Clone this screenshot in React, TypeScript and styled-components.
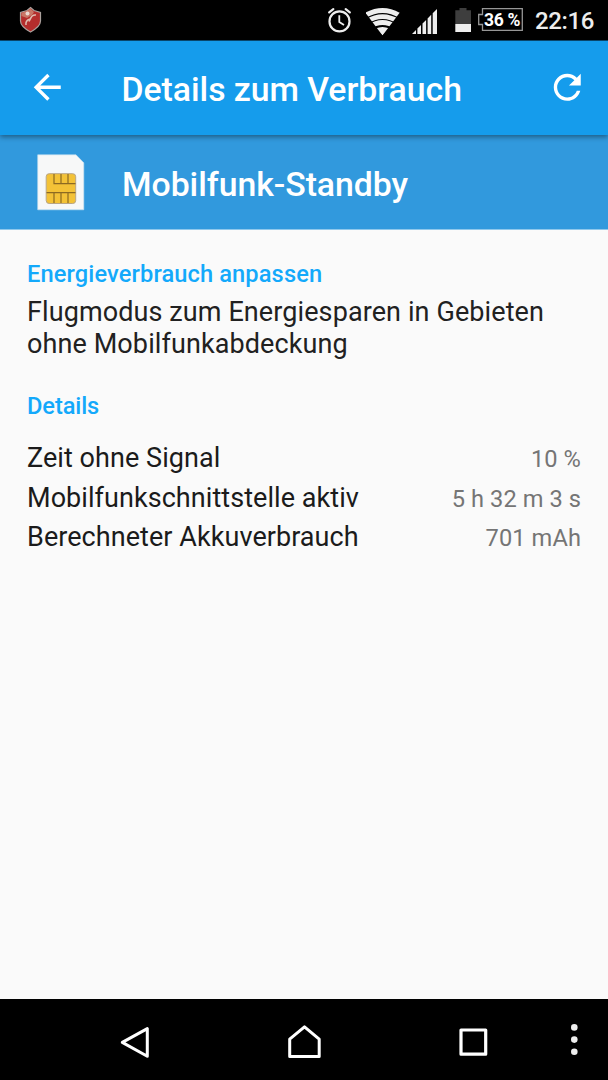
import React from "react";
import styled, { createGlobalStyle } from "styled-components";

const GlobalStyle = createGlobalStyle`
  * { box-sizing: border-box; }
  body { margin: 0; background: #fafafa; font-family: Roboto, "Liberation Sans", sans-serif; }
  svg { display: block; flex: none; }
`;

const Screen = styled.div`
  width: 608px;
  height: 1080px;
  display: flex;
  flex-direction: column;
  background: #fafafa;
  overflow: hidden;
`;

const StatusBar = styled.header`
  height: 41px;
  flex: none;
  display: flex;
  align-items: flex-start;
  padding: 6px 12px 0 19px;
  background: #000;
  border-bottom: 1px solid #0a4a72;
`;

const StatusIcons = styled.div`
  display: flex;
  margin-left: auto;
`;

const BatteryPercent = styled.div`
  width: 46px;
  height: 28px;
  margin-left: 6px;
  display: grid;
  > * { grid-area: 1 / 1; }
`;

const PercentText = styled.span`
  padding-left: 6px;
  font-size: 17.5px;
  font-weight: 700;
  line-height: 28px;
  letter-spacing: -0.35px;
  white-space: nowrap;
  color: #fff;
`;

const Clock = styled.time`
  width: 61px;
  margin-left: 11px;
  font-size: 24px;
  font-weight: 500;
  line-height: 31px;
  letter-spacing: -0.35px;
  color: #ededed;
`;

const AppBar = styled.div`
  height: 94px;
  flex: none;
  display: flex;
  align-items: center;
  padding: 0 21px 1px 27px;
  background: #159cec;
  box-shadow: 0 2px 5px rgba(0, 0, 0, 0.4);
  z-index: 1;
`;

const Heading = styled.h1`
  margin: 4px auto 0 54px;
  font-size: 33.8px;
  font-weight: 500;
  line-height: 40px;
  letter-spacing: -0.04px;
  color: #fff;
  white-space: nowrap;
`;

const AppEntry = styled.div`
  height: 95px;
  flex: none;
  display: flex;
  align-items: center;
  padding-left: 36px;
  background: #3199dd;
  border-bottom: 1px solid #8fc8ec;
`;

const EntryName = styled.h2`
  margin: 5px 0 0 36px;
  font-size: 33.8px;
  font-weight: 500;
  line-height: 40px;
  letter-spacing: -0.04px;
  color: #fff;
`;

const Content = styled.main`
  flex: 1;
  padding: 30px 27px 0;
`;

const SectionTitle = styled.h3<{ $spacing?: number }>`
  margin: 0;
  font-size: 23.64px;
  font-weight: 500;
  line-height: 28px;
  letter-spacing: ${({ $spacing = 0 }) => $spacing}px;
  color: #13a9fb;
`;

const Advice = styled.p`
  margin: 8px 0 32px;
  font-size: 27px;
  line-height: 32px;
  letter-spacing: 0.1px;
  color: #212121;
`;

const Rows = styled.dl`
  margin: 19px 0 0;
`;

const Row = styled.div`
  height: 39.6px;
  display: flex;
  justify-content: space-between;
  align-items: baseline;
`;

const Label = styled.dt`
  font-size: 27px;
  line-height: 39px;
  letter-spacing: 0.06px;
  color: #1b1b1b;
`;

const Value = styled.dd`
  margin: 0;
  font-size: 23.64px;
  line-height: 39px;
  letter-spacing: 0.08px;
  color: #757575;
`;

const NavBar = styled.nav`
  height: 81px;
  flex: none;
  display: flex;
  align-items: center;
  padding: 5px 24px 0 118px;
  background: #000;
`;

const NavSlot = styled.span<{ $before?: number }>`
  display: block;
  margin-left: ${({ $before = 0 }) => $before}px;
`;

const WifiIcon = styled.svg`
  margin-left: 13px;
`;

const SignalIcon = styled.svg`
  margin-left: 12px;
`;

const BatteryIcon = styled.svg`
  margin-left: 17px;
`;

const Shield = () => (
  <svg width="24" height="28" viewBox="19 6 24 28">
    <path d="M30.5 7.5 34 10.5 40.5 12.5V21C40.5 26 35 29.5 30.5 32 26 29.5 20.5 26 20.5 21V12.5L27 10.5Z" fill="#b42d2c" stroke="#aaa19d" strokeWidth="1.2" />
    <path d="M21.5 13 28 10.5 30.5 8.5 34 12 32 15 27 18 21.5 16Z" fill="#c87565" />
    <circle cx="27.5" cy="13.5" r="2" fill="#ead8d0" />
    <path d="M36 15C31.5 14.5 31 18 29 21.5M30 19C26.5 20 25.5 22 26 25" fill="none" stroke="#dfbcb0" strokeWidth="1.5" />
  </svg>
);

const Alarm = () => (
  <svg width="26" height="28" viewBox="327 6 26 28" fill="none" stroke="#eee" strokeLinecap="round">
    <circle cx="339.5" cy="21.4" r="10" strokeWidth="2.2" />
    <path d="M339.3 15.2V22L344 25" strokeWidth="1.8" strokeLinecap="butt" />
    <path d="M329.2 12.3 333.3 9.2M345.7 9.2 349.8 12.3" strokeWidth="2.3" />
  </svg>
);

const Wifi = () => (
  <WifiIcon width="34" height="30" viewBox="366 6 34 30">
    <defs>
      <clipPath id="wifi-fan"><path d="M382.5 35.5 364.4 11.5V6H400.6V11.5Z" /></clipPath>
    </defs>
    <g clipPath="url(#wifi-fan)" fill="none" stroke="#eee" strokeWidth="4.7">
      <path d="M364 16.2Q382.5 4.8 401 16.2" />
      <path d="M366 21.9Q382.5 11.3 399 21.9" />
      <path d="M369 27Q382.5 18 396 27" />
      <path d="M382.5 35.5 375.5 28.6Q382.5 25.2 389.5 28.6Z" fill="#eee" stroke="none" />
    </g>
  </WifiIcon>
);

const Signal = () => (
  <SignalIcon width="26" height="28" viewBox="412 6 26 28" fill="#eee">
    <path d="M412 34 416 30V34ZM417.4 28.6 421 25V34H417.4ZM422.5 23.5 426.1 19.9V34H422.5ZM427.6 18.4 431.2 14.8V34H427.6ZM432.7 13.3 437 9V34H432.7Z" />
  </SignalIcon>
);

const Battery = () => (
  <BatteryIcon width="17" height="28" viewBox="455 6 17 28">
    <path d="M455.3 10.3H459.5V8H466.5V10.3H471V24H455.3Z" fill="#3e3e3e" />
    <path d="M455.3 24H471V32H455.3Z" fill="#eee" />
  </BatteryIcon>
);

const BatteryFrame = () => (
  <svg width="46" height="28" viewBox="478 6 46 28">
    <path d="M482.5 8.7H522.3V30.4H482.5V24.5H478.7V14.5H482.5Z" fill="none" stroke="#969696" strokeWidth="1.3" />
  </svg>
);

const BackArrow = () => (
  <svg width="40.5" height="40.5" viewBox="0 0 24 24" fill="#fff">
    <path d="M20 11H7.83l5.59-5.59L12 4l-8 8 8 8 1.41-1.41L7.83 13H20v-2z" />
  </svg>
);

const Refresh = () => (
  <svg width="40.5" height="40.5" viewBox="0 0 24 24" fill="#fff">
    <path d="M17.65 6.35C16.2 4.9 14.21 4 12 4c-4.42 0-7.99 3.58-7.99 8s3.57 8 7.99 8c3.73 0 6.84-2.55 7.73-6h-2.08c-.82 2.33-3.04 4-5.65 4-3.31 0-6-2.69-6-6s2.69-6 6-6c1.66 0 3.14.69 4.22 1.78L13 11h7V4l-2.35 2.35z" />
  </svg>
);

const SimCard = () => (
  <svg width="50" height="60" viewBox="36 152 50 60">
    <path d="M37.7 154.8H76L83.8 162.8V209.8H37.7Z" fill="#f7f8f8" stroke="#c0dcef" strokeWidth="0.6" />
    <rect x="46.2" y="173.7" width="29.5" height="29.8" rx="3" fill="#f3c237" stroke="#b8a586" strokeWidth="1" />
    <path d="M54 174V183.7H75.5M61 174V183.7M68 174V183.7M46.5 192.7H75.5M54 192.7V203M61 192.7V203M68 192.7V203" fill="none" stroke="#8c6a22" strokeWidth="1.2" />
  </svg>
);

const details = [
  ["Zeit ohne Signal", "10 %"],
  ["Mobilfunkschnittstelle aktiv", "5 h 32 m 3 s"],
  ["Berechneter Akkuverbrauch", "701 mAh"],
];

export default function App() {
  return (
    <Screen>
      <GlobalStyle />
      <StatusBar>
        <Shield />
        <StatusIcons>
          <Alarm />
          <Wifi />
          <Signal />
          <Battery />
          <BatteryPercent>
            <BatteryFrame />
            <PercentText>36 %</PercentText>
          </BatteryPercent>
          <Clock>22:16</Clock>
        </StatusIcons>
      </StatusBar>
      <AppBar>
        <BackArrow />
        <Heading>Details zum Verbrauch</Heading>
        <Refresh />
      </AppBar>
      <AppEntry>
        <SimCard />
        <EntryName>Mobilfunk-Standby</EntryName>
      </AppEntry>
      <Content>
        <SectionTitle $spacing={0.12}>Energieverbrauch anpassen</SectionTitle>
        <Advice>Flugmodus zum Energiesparen in Gebieten ohne Mobilfunkabdeckung</Advice>
        <SectionTitle $spacing={-0.1}>Details</SectionTitle>
        <Rows>
          {details.map(([label, value]) => (
            <Row key={label}>
              <Label>{label}</Label>
              <Value>{value}</Value>
            </Row>
          ))}
        </Rows>
      </Content>
      <NavBar>
        <NavSlot>
          <svg width="34" height="36" viewBox="118 1024 34 36">
            <path d="M147.3 1028.6V1056.2L122.3 1042.4Z" fill="none" stroke="#fff" strokeWidth="3" strokeLinejoin="round" />
          </svg>
        </NavSlot>
        <NavSlot $before={134}>
          <svg width="38" height="36" viewBox="286 1024 38 36">
            <path d="M289.7 1039.2 304.5 1026.8 319.2 1039.2V1056.4H289.7Z" fill="none" stroke="#fff" strokeWidth="3" strokeLinejoin="round" />
          </svg>
        </NavSlot>
        <NavSlot $before={133}>
          <svg width="33" height="36" viewBox="457 1024 33 36">
            <rect x="461" y="1030" width="24.7" height="24.2" fill="none" stroke="#fff" strokeWidth="3.2" strokeLinejoin="round" />
          </svg>
        </NavSlot>
        <NavSlot $before={76}>
          <svg width="16" height="36" viewBox="566 1024 16 36" fill="#eee">
            <circle cx="574.3" cy="1027.4" r="3.3" />
            <circle cx="574.3" cy="1039.6" r="3.3" />
            <circle cx="574.3" cy="1051.8" r="3.3" />
          </svg>
        </NavSlot>
      </NavBar>
    </Screen>
  );
}
